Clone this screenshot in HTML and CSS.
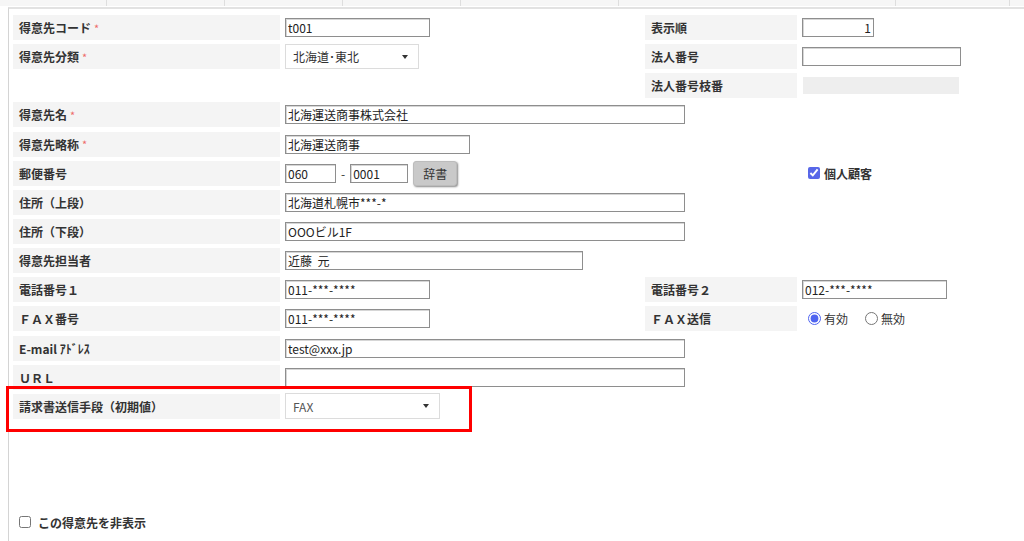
FILE: index.html
```html
<!DOCTYPE html>
<html lang="ja">
<head>
<meta charset="utf-8">
<title>得意先</title>
<link rel="stylesheet" href="styles.css">
</head>
<body>
<div class="topstrip">
  <div class="tcell w1"></div><div class="tcell w2"></div><div class="tcell w3"></div><div class="tcell w4"></div><div class="tcell w5"></div><div class="tcell w6"></div><div class="tcell w7"></div><div class="tcell w8"></div>
</div>
<div class="panel">
  <div class="form">
    <div class="lbl">得意先コード <span class="req">*</span></div>
    <div class="fld"><input class="inp w145" type="text" value="t001"></div>
    <div class="lbl">表示順</div>
    <div class="fld"><input class="inp w72 right" type="text" value="1"></div>

    <div class="lbl">得意先分類 <span class="req">*</span></div>
    <div class="fld"><div class="sel w134"><span class="seltext">北海道･東北</span><span class="arrow"></span></div></div>
    <div class="lbl">法人番号</div>
    <div class="fld"><input class="inp w159" type="text" value=""></div>

    <div class="blank"></div>
    <div class="blank"></div>
    <div class="lbl">法人番号枝番</div>
    <div class="fld"><div class="ro"></div></div>

    <div class="lbl">得意先名 <span class="req">*</span></div>
    <div class="fld wide"><input class="inp w400" type="text" value="北海運送商事株式会社"></div>

    <div class="lbl">得意先略称 <span class="req">*</span></div>
    <div class="fld wide"><input class="inp w185" type="text" value="北海運送商事"></div>

    <div class="lbl">郵便番号</div>
    <div class="fld postal">
      <input class="inp w51" type="text" value="060">
      <span class="dash">-</span>
      <input class="inp w58" type="text" value="0001">
      <button class="btn" type="button">辞書</button>
    </div>
    <div class="blank"></div>
    <div class="fld check"><input type="checkbox" class="cb" checked><span class="cblabel">個人顧客</span></div>

    <div class="lbl">住所（上段）</div>
    <div class="fld wide"><input class="inp w400" type="text" value="北海道札幌市***-*"></div>

    <div class="lbl">住所（下段）</div>
    <div class="fld wide"><input class="inp w400" type="text" value="OOOビル1F"></div>

    <div class="lbl">得意先担当者</div>
    <div class="fld wide"><input class="inp w298" type="text" value="近藤  元"></div>

    <div class="lbl">電話番号１</div>
    <div class="fld"><input class="inp w145" type="text" value="011-***-****"></div>
    <div class="lbl">電話番号２</div>
    <div class="fld"><input class="inp w145" type="text" value="012-***-****"></div>

    <div class="lbl">ＦＡＸ番号</div>
    <div class="fld"><input class="inp w145" type="text" value="011-***-****"></div>
    <div class="lbl">ＦＡＸ送信</div>
    <div class="fld radios">
      <label class="radio"><input type="radio" name="fax" checked><span>有効</span></label>
      <label class="radio"><input type="radio" name="fax"><span>無効</span></label>
    </div>

    <div class="lbl">E-mail ｱﾄﾞﾚｽ</div>
    <div class="fld wide"><input class="inp w400" type="text" value="test@xxx.jp"></div>

    <div class="lbl">ＵＲＬ</div>
    <div class="fld wide"><input class="inp w400" type="text" value=""></div>

    <div class="lbl">請求書送信手段（初期値）</div>
    <div class="fld wide"><div class="sel w155"><span class="seltext grey">FAX</span><span class="arrow"></span></div></div>
  </div>

  <div class="footer">
    <input type="checkbox" class="cb2"><span class="cblabel">この得意先を非表示</span>
  </div>
</div>
<div class="highlight"></div>
</body>
</html>
```

FILE: styles.css
```css
* { box-sizing: border-box; }
html, body { margin: 0; padding: 0; background: #ffffff; }
body {
  font-family: "Noto Sans CJK JP", "Noto Sans", sans-serif;
  font-size: 12px;
  color: #333333;
  width: 1024px;
  height: 541px;
  overflow: hidden;
  position: relative;
}
.topstrip {
  display: flex;
  height: 6px;
  background: #f6f6f6;
}
.tcell { border-right: 1px solid #dedede; height: 6px; }
.w1 { width: 107px; }
.w2 { width: 118px; }
.w3 { width: 118px; }
.w4 { width: 118px; }
.w5 { width: 158px; }
.w6 { width: 277px; }
.w7 { width: 114px; }
.w8 { flex: 1; border-right: none; }

.panel {
  margin-top: 1px;
  margin-left: 8px;
  border-top: 2px solid #e2e2e2;
  border-left: 1px solid #d4d4d4;
  padding: 6px 0 0 4px;
  height: 534px;
}
.form {
  display: grid;
  grid-template-columns: 267px 355px 152px 1fr;
  grid-auto-rows: 25px;
  column-gap: 5px;
  row-gap: 4.15px;
}
.lbl {
  background: #f4f4f4;
  font-weight: bold;
  padding-left: 6px;
  display: flex;
  align-items: center;
  white-space: nowrap;
}
.req { color: #ee6a6a; font-weight: normal; margin-left: 3px; font-size: 11px; }
.fld {
  display: flex;
  align-items: center;
  min-width: 0;
}
.fld.wide { grid-column: 2 / span 3; }
.inp {
  height: 19px;
  border: 1px solid #8e8e8e;
  box-shadow: inset 1px 1px 0 #d6d6d6;
  padding: 0 2px;
  font-family: "Noto Sans CJK JP", "Noto Sans", sans-serif;
  font-size: 12px;
  color: #222222;
  background: #ffffff;
  outline: none;
}
.inp.right { text-align: right; }
.w51 { width: 51px; }
.w58 { width: 58px; }
.w72 { width: 72px; }
.w145 { width: 145px; }
.w159 { width: 159px; }
.w185 { width: 185px; }
.w298 { width: 298px; }
.w400 { width: 400px; }

.sel {
  height: 25px;
  border: 1px solid #dcdcdc;
  background: #ffffff;
  display: flex;
  align-items: center;
  justify-content: space-between;
  padding: 0 10px 0 7px;
}
.w134 { width: 134px; }
.w155 { width: 155px; height: 26px; }
.seltext { color: #333333; }
.seltext.grey { color: #555555; }
.arrow {
  width: 0; height: 0;
  border-left: 3px solid transparent;
  border-right: 3px solid transparent;
  border-top: 4px solid #333333;
}
.ro {
  width: 156px;
  height: 17px;
  margin-left: 1px;
  background: #eeeeee;
}
.postal .dash { margin: 0 5px; color: #333333; }
.btn {
  margin-left: 5px;
  width: 44px;
  height: 25px;
  background: #c9c9c9;
  border: 1px solid #bcbcbc;
  border-radius: 3px;
  box-shadow: 1px 1px 2px #8a8a8a;
  font-family: "Noto Sans CJK JP", "Noto Sans", sans-serif;
  font-size: 12px;
  color: #333333;
  padding: 0;
}
.check { padding-left: 6px; }
.cb {
  width: 12px; height: 12px; margin: 0 4px 0 0;
  accent-color: #5867e8;
}
.cblabel { font-weight: bold; color: #333333; }
.radios { padding-left: 6px; gap: 17px; }
.radio { display: flex; align-items: center; }
.radio input { width: 13px; height: 13px; margin: 0 3px 0 0; accent-color: #4f64f0; }

.footer {
  margin-top: 95px;
  margin-left: 6px;
  display: flex;
  align-items: center;
}
.cb2 { width: 12px; height: 12px; margin: 0 7px 0 0; }

.highlight {
  position: absolute;
  left: 6px;
  top: 386px;
  width: 466px;
  height: 46px;
  border: 3px solid #ff0000;
  pointer-events: none;
}
```
